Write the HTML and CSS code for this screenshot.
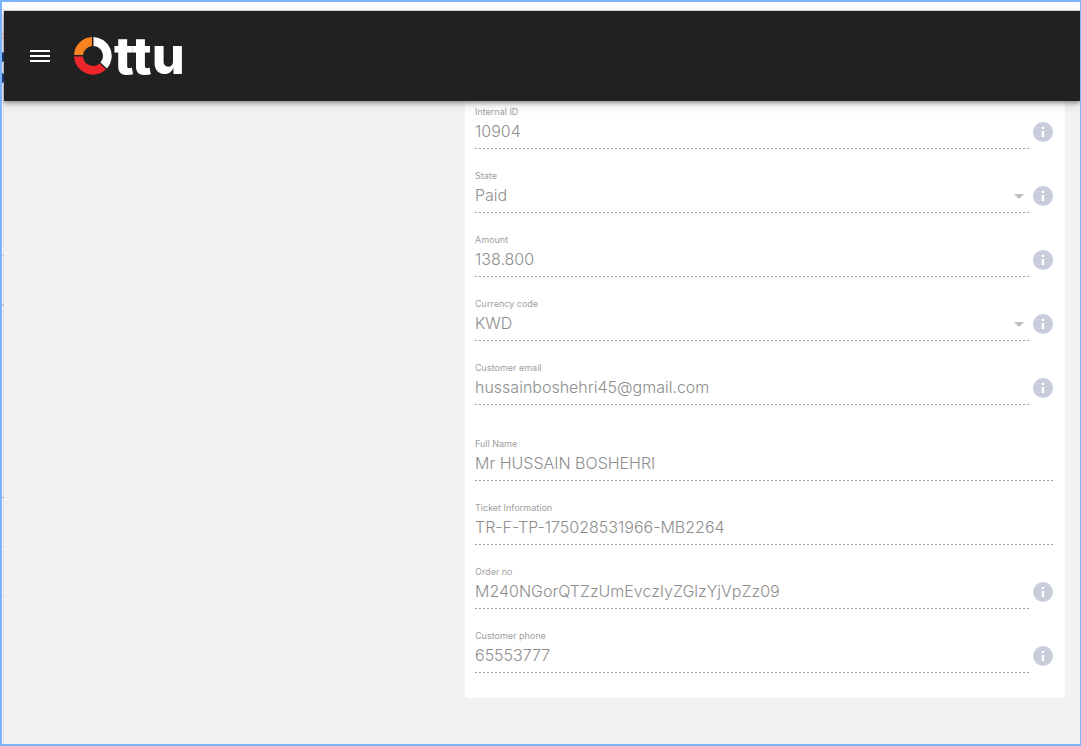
FILE: index.html
```
<!DOCTYPE html>
<html lang="en">
<head>
    <meta charset="UTF-8">
    <meta name="viewport" content="width=device-width, initial-scale=1.0">
    <title>Ottu</title>
    <link rel="stylesheet" href="styles.css">
</head>
<body>
    <svg class="sprite" aria-hidden="true">
        <symbol id="info" viewBox="0 0 20 20">
            <circle cx="10" cy="10" r="10" fill="#c9cddb"/>
            <path d="M8.800 5h2.400v2H8.800zM8.800 9h2.400v6H8.800z" fill="#fff"/>
        </symbol>
    </svg>
    <div class="gutter" aria-hidden="true">
        <span class="mark mark-red"></span>
        <span class="mark mark-navy"></span>
        <span class="mark mark-navy mark-navy-low"></span>
        <span class="mark tick tick-1"></span>
        <span class="mark tick tick-2"></span>
        <span class="mark tick tick-3"></span>
        <span class="mark tick tick-4"></span>
        <span class="mark tick tick-5"></span>
    </div>
    <div class="app">
        <header class="toolbar">
            <button type="button" class="menu-button" aria-label="Menu">
                <svg width="20" height="12" viewBox="0 0 20 12"><path d="M0 0h20v2H0zM0 5h20v2H0zM0 10h20v2H0z" fill="#fff"/></svg>
            </button>
            <a href="#" class="logo" aria-label="Ottu">
                <svg width="38" height="38" viewBox="0 0 38 38">
                    <path d="M0 18A19 19 0 0 1 18 0V9A10 10 0 0 0 9 18Z" fill="#f98320"/>
                    <path d="M19.5 0A19 19 0 0 1 33 31.5L26.5 25.5A10 10 0 0 0 19.5 9Z" fill="#fff"/>
                    <path d="M0 19.5H9A10 10 0 0 0 25.5 26.5L32 32.5A19 19 0 0 1 0 19.5Z" fill="#ee252b"/>
                </svg>
                <span class="logo-text">ttu</span>
            </a>
        </header>
        <main class="content">
            <form class="panel">
                <div class="group">
                    <div class="row">
                        <div class="field">
                            <label for="internalId">Internal ID</label>
                            <input type="text" id="internalId" value="10904" disabled>
                        </div>
                        <svg class="info"><use href="#info"/></svg>
                    </div>
                    <div class="row">
                        <div class="field">
                            <label for="state">State</label>
                            <select id="state" disabled>
                                <option>Paid</option>
                            </select>
                            <span class="caret"></span>
                        </div>
                        <svg class="info"><use href="#info"/></svg>
                    </div>
                    <div class="row">
                        <div class="field">
                            <label for="amount">Amount</label>
                            <input type="text" id="amount" value="138.800" disabled>
                        </div>
                        <svg class="info"><use href="#info"/></svg>
                    </div>
                    <div class="row">
                        <div class="field">
                            <label for="currency">Currency code</label>
                            <select id="currency" disabled>
                                <option>KWD</option>
                            </select>
                            <span class="caret"></span>
                        </div>
                        <svg class="info"><use href="#info"/></svg>
                    </div>
                    <div class="row">
                        <div class="field">
                            <label for="email">Customer email</label>
                            <input type="email" id="email" value="hussainboshehri45@gmail.com" disabled>
                        </div>
                        <svg class="info"><use href="#info"/></svg>
                    </div>
                </div>
                <div class="group">
                    <div class="row">
                        <div class="field">
                            <label for="fullName">Full Name</label>
                            <input type="text" id="fullName" value="Mr HUSSAIN BOSHEHRI" disabled>
                        </div>
                    </div>
                    <div class="row">
                        <div class="field">
                            <label for="ticket">Ticket Information</label>
                            <input type="text" id="ticket" value="TR-F-TP-175028531966-MB2264" disabled>
                        </div>
                    </div>
                    <div class="row">
                        <div class="field">
                            <label for="orderNo">Order no</label>
                            <input type="text" id="orderNo" value="M240NGorQTZzUmEvczIyZGlzYjVpZz09" disabled>
                        </div>
                        <svg class="info"><use href="#info"/></svg>
                    </div>
                    <div class="row">
                        <div class="field">
                            <label for="phone">Customer phone</label>
                            <input type="tel" id="phone" value="65553777" disabled>
                        </div>
                        <svg class="info"><use href="#info"/></svg>
                    </div>
                </div>
            </form>
        </main>
    </div>
</body>
</html>
```
FILE: styles.css
```
* {
    box-sizing: border-box;
}

body {
    margin: 0;
    min-height: 100vh;
    display: flex;
    position: relative;
    padding-top: 8px;
    border: 2px solid #7ab3ff;
    border-right-width: 1px;
    background-color: #fff;
    font-family: Inter, "Open Sans", sans-serif;
}

.sprite {
    position: absolute;
    width: 0;
    height: 0;
}

.gutter {
    width: 1px;
}

.mark {
    position: absolute;
    left: 0;
    width: 2px;
}

.mark-red {
    top: 32px;
    height: 5px;
    border: 1px solid #f5b5bc;
    border-left: none;
}

.mark-navy {
    top: 50px;
    height: 10px;
    border-radius: 0 2px 2px 0;
    background-color: #1d3f86;
}

.mark-navy-low {
    top: 71px;
}

.tick {
    height: 1px;
    background-color: #ccc;
}

.tick-1 {
    top: 253px;
}

.tick-2 {
    top: 302px;
    height: 2px;
}

.tick-3 {
    top: 495px;
    background-color: #aaa;
}

.tick-4 {
    top: 544px;
}

.tick-5 {
    top: 593px;
}

.app {
    flex: 1;
    display: flex;
    flex-direction: column;
    border-top: 1px solid #ddd;
    border-left: 1px solid #ddd;
    background-color: #f2f2f2;
}

.toolbar {
    height: 90px;
    display: flex;
    align-items: center;
    gap: 24px;
    padding: 0 26px;
    background-color: #212121;
    box-shadow: 0 2px 4px rgba(0, 0, 0, 0.35), 0 4px 10px rgba(0, 0, 0, 0.12);
    z-index: 1;
}

.menu-button {
    display: flex;
    padding: 0;
    border: none;
    background: none;
}

.logo {
    display: flex;
    align-items: center;
    gap: 2px;
    color: #fff;
    text-decoration: none;
}

.logo-text {
    font-size: 52px;
    line-height: 50px;
    font-weight: 800;
}

.content {
    display: flex;
    justify-content: flex-end;
    padding: 0 15px 46px;
}

.panel {
    width: 100%;
    max-width: 600px;
    padding: 5px 10px 25px;
    border-radius: 0 0 4px 4px;
    background-color: #fff;
}

.group {
    display: grid;
    gap: 21px;
}

.group + .group {
    margin-top: 33px;
}

.row {
    display: flex;
    align-items: center;
    gap: 2px;
}

.field {
    flex: 1;
    position: relative;
}

label {
    display: block;
    font-size: 9px;
    line-height: 12px;
    color: #9e9e9e;
}

input,
select {
    display: block;
    width: 100%;
    height: 31px;
    padding: 0 0 6px;
    border: none;
    border-radius: 0;
    appearance: none;
    font-family: inherit;
    font-size: 16px;
    font-weight: 300;
    color: #8e8e8e;
    opacity: 1;
    /* dotted underline */
    background: repeating-linear-gradient(90deg, #9e9e9e 0 2px, transparent 2px 4px) left bottom / 100% 1px no-repeat;
}

.caret {
    position: absolute;
    right: 7px;
    bottom: 14px;
    border: 5px solid transparent;
    border-top-color: #bdbdbd;
    border-bottom: none;
}

.info {
    width: 20px;
    height: 20px;
    margin: 8px 2px 0 0;
}
```
